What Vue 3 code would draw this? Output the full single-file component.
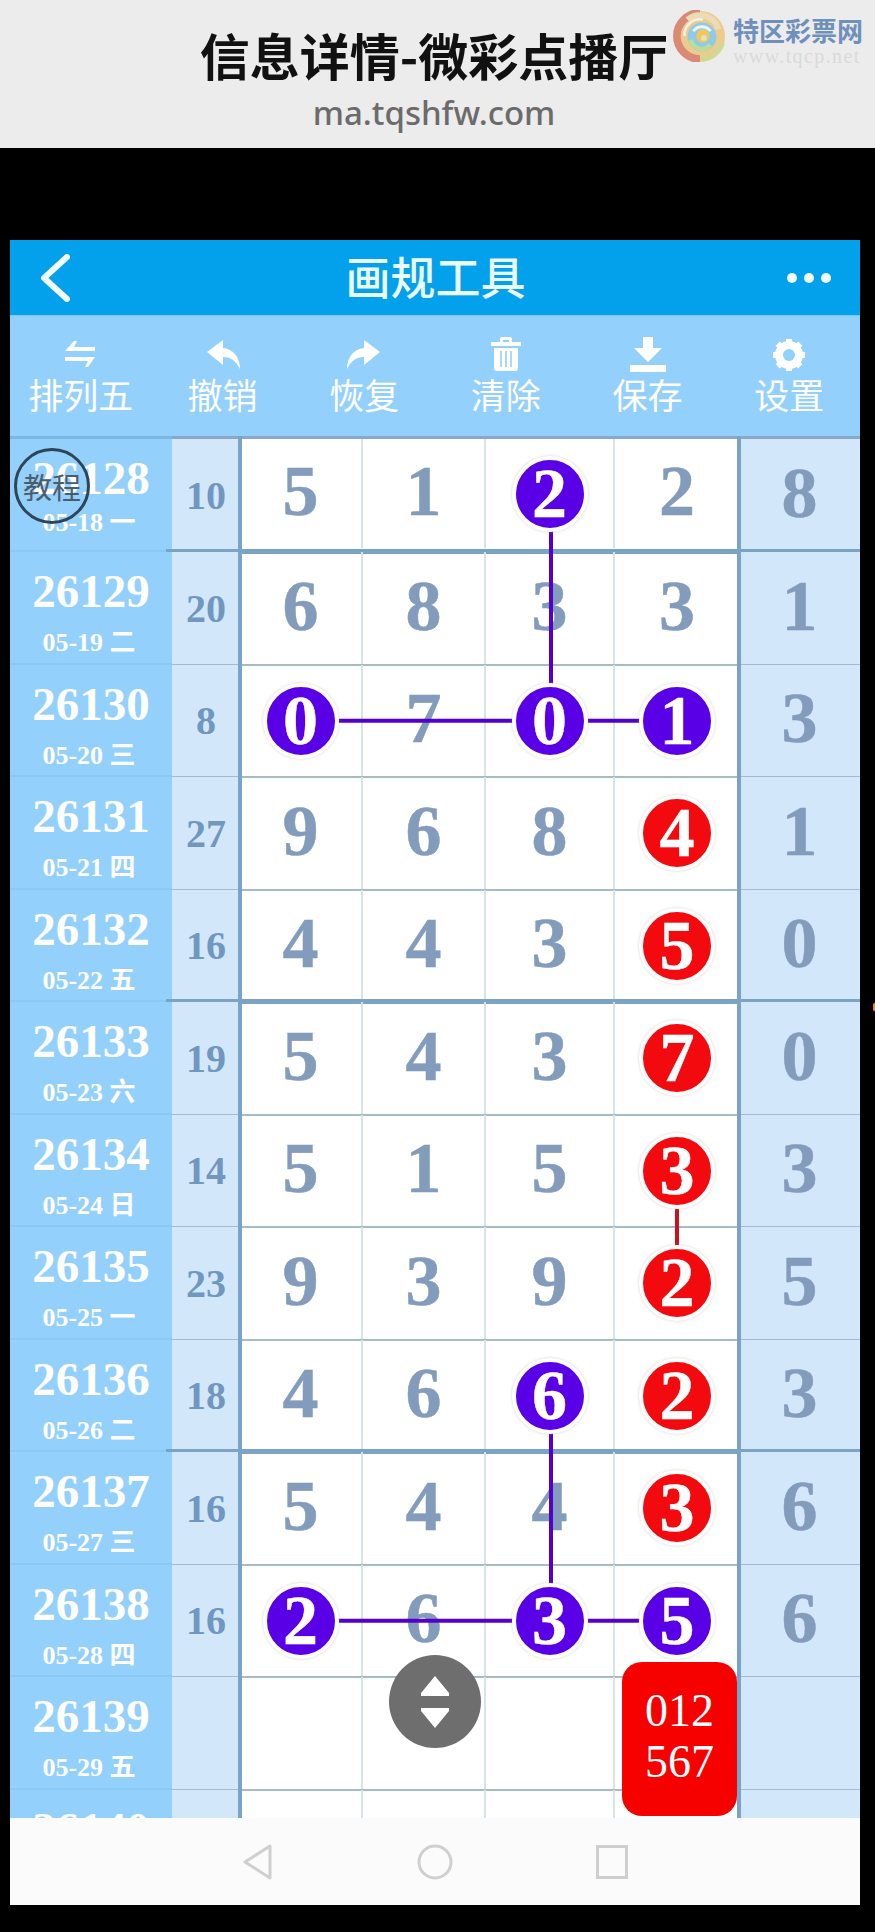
<template>
  <div class="page">
    <header class="site-head">
      <h1 class="site-title">信息详情-微彩点播厅</h1>
      <div class="site-domain">ma.tqshfw.com</div>
      <div class="watermark">
        <svg class="wm-logo" viewBox="0 0 54 54" width="54" height="52">
          <circle cx="27" cy="27" r="26" fill="#eecb8c" />
          <path d="M27 3 A24 24 0 0 0 27 51" fill="none" stroke="#d98a76" stroke-width="8" />
          <path d="M27 51 A24 24 0 0 0 50 34" fill="none" stroke="#d3d890" stroke-width="6" />
          <path d="M14 10 A20 20 0 0 1 46 20" fill="none" stroke="#eadcb8" stroke-width="6" />
          <path d="M11 27 A16 16 0 0 1 30 10" fill="none" stroke="#f4efe6" stroke-width="2.5" />
          <circle cx="29" cy="28" r="15" fill="#8ccbea" />
          <path d="M17 31 A12 12 0 0 0 38 36" fill="none" stroke="#bcdc9a" stroke-width="5" />
          <path d="M20 22 A11 11 0 0 1 38 22" fill="none" stroke="#f1f3ee" stroke-width="3" />
          <circle cx="30" cy="27" r="7" fill="#f1c75e" />
          <circle cx="31" cy="29" r="3" fill="#dce3c0" />
        </svg>
        <div class="wm-text">
          <div class="wm-name">特区彩票网</div>
          <div class="wm-url">www.tqcp.net</div>
        </div>
      </div>
    </header>

    <div class="app">
      <div class="app-bar">
        <svg class="back" viewBox="0 0 30 48" width="30" height="48">
          <path d="M27 3 L4 24 L27 45" fill="none" stroke="#f2fbff" stroke-width="6" stroke-linecap="round" stroke-linejoin="round" />
        </svg>
        <span class="app-title">画规工具</span>
        <div class="dots"><i></i><i></i><i></i></div>
      </div>

      <div class="toolbar">
        <div class="tool">
          <svg viewBox="0 0 38 38" width="38" height="38">
            <path d="M3 15 L12 5 H15 L12 11 H33 V15 Z M3 21 H33 L26 31 H23 L26 25 H3 Z" fill="#fff" />
          </svg>
          <span>排列五</span>
        </div>
        <div class="tool">
          <svg viewBox="0 0 38 38" width="38" height="38">
            <path d="M3 16 L19 4 V12 C30 13 36 22 36 33 C32 25 27 21 19 21 V29 Z" fill="#fff" />
          </svg>
          <span>撤销</span>
        </div>
        <div class="tool">
          <svg viewBox="0 0 38 38" width="38" height="38">
            <path d="M35 16 L19 4 V12 C8 13 2 22 2 33 C6 25 11 21 19 21 V29 Z" fill="#fff" />
          </svg>
          <span>恢复</span>
        </div>
        <div class="tool">
          <svg viewBox="0 0 38 38" width="38" height="38">
            <path d="M4 6 H13 V3 Q13 1 15 1 H23 Q25 1 25 3 V6 H34 V10 H4 Z M16 6 H22 V4 H16 Z" fill="#fff" fill-rule="evenodd" />
            <path d="M7 12 H31 V32 Q31 35 28 35 H10 Q7 35 7 32 Z" fill="#fff" />
            <path d="M14 15 V31 M19 15 V31 M24 15 V31" stroke="#94d0fc" stroke-width="1.6" />
          </svg>
          <span>清除</span>
        </div>
        <div class="tool">
          <svg viewBox="0 0 38 38" width="38" height="38">
            <path d="M14 1 H24 V12 H33 L19 26 L5 12 H14 Z" fill="#fff" />
            <path d="M1 29 H37 V36 H1 Z" fill="#fff" />
          </svg>
          <span>保存</span>
        </div>
        <div class="tool">
          <svg viewBox="0 0 38 38" width="38" height="38">
            <circle cx="19" cy="19" r="10.5" fill="none" stroke="#fff" stroke-width="7" />
            <path d="M19 3 V35 M3 19 H35 M7.7 7.7 L30.3 30.3 M30.3 7.7 L7.7 30.3" stroke="#fff" stroke-width="6" />
            <circle cx="19" cy="19" r="6" fill="#94d0fc" />
          </svg>
          <span>设置</span>
        </div>
      </div>

      <div class="board">
        <div class="top-line"></div>
        <div v-for="(row, i) in rows" :key="row.id" class="row" :class="{ first: i === 0, thick: i % 4 === 0 }">
          <div class="c-date">
            <div class="r-id">{{ row.id }}</div>
            <div class="r-date">{{ row.date }}</div>
          </div>
          <div class="c-sum">{{ row.sum }}</div>
          <div v-for="(n, j) in row.nums" :key="j" class="c-num" :class="{ last: j === 4 }">
            <span v-if="hitAt(i, j)" class="ball" :class="hitAt(i, j)">{{ n }}</span>
            <template v-else>{{ n }}</template>
          </div>
        </div>

        <i class="vline v1"></i>
        <i class="vline v2"></i>

        <svg class="links" width="850" height="1382">
          <line v-for="(s, k) in segments" :key="k" :x1="s.x1" :y1="s.y1" :x2="s.x2" :y2="s.y2" :stroke="s.color" stroke-width="4" />
        </svg>

        <div class="tutorial">教程</div>
        <div class="pick"><span>012</span><span>567</span></div>
        <div class="scroller">
          <svg viewBox="0 0 30 52" width="30" height="52">
            <path d="M15 0 L29 17 V20 H1 V17 Z M1 32 H29 V35 L15 52 L1 35 Z" fill="#fff" />
          </svg>
        </div>
      </div>

      <div class="nav">
        <svg viewBox="0 0 32 36" width="32" height="36">
          <path d="M28 2 L3 18 L28 34 Z" fill="none" stroke="#cfcfcf" stroke-width="3" stroke-linejoin="round" />
        </svg>
        <svg viewBox="0 0 36 36" width="36" height="36">
          <circle cx="18" cy="18" r="16" fill="none" stroke="#cfcfcf" stroke-width="3" />
        </svg>
        <svg viewBox="0 0 32 34" width="32" height="34">
          <rect x="1.5" y="1.5" width="29" height="31" fill="none" stroke="#cfcfcf" stroke-width="3" />
        </svg>
      </div>
    </div>
    <i class="edge-dot"></i>
  </div>
</template>

<script setup>
const rows = [
  { id: 26128, date: '05-18 一', sum: 10, nums: [5, 1, 2, 2, 8] },
  { id: 26129, date: '05-19 二', sum: 20, nums: [6, 8, 3, 3, 1] },
  { id: 26130, date: '05-20 三', sum: 8, nums: [0, 7, 0, 1, 3] },
  { id: 26131, date: '05-21 四', sum: 27, nums: [9, 6, 8, 4, 1] },
  { id: 26132, date: '05-22 五', sum: 16, nums: [4, 4, 3, 5, 0] },
  { id: 26133, date: '05-23 六', sum: 19, nums: [5, 4, 3, 7, 0] },
  { id: 26134, date: '05-24 日', sum: 14, nums: [5, 1, 5, 3, 3] },
  { id: 26135, date: '05-25 一', sum: 23, nums: [9, 3, 9, 2, 5] },
  { id: 26136, date: '05-26 二', sum: 18, nums: [4, 6, 6, 2, 3] },
  { id: 26137, date: '05-27 三', sum: 16, nums: [5, 4, 4, 3, 6] },
  { id: 26138, date: '05-28 四', sum: 16, nums: [2, 6, 3, 5, 6] },
  { id: 26139, date: '05-29 五', sum: '', nums: ['', '', '', '', ''] },
  { id: 26140, date: '05-30 六', sum: '', nums: ['', '', '', '', ''] }
]

// 选中的号码，row-col
const purple = ['0-2', '2-0', '2-2', '2-3', '8-2', '10-0', '10-2', '10-3']
const red = ['3-3', '4-3', '5-3', '6-3', '7-3', '8-3', '9-3']

const hitAt = (i, j) => {
  const key = `${i}-${j}`
  if (purple.includes(key)) return 'purple'
  if (red.includes(key)) return 'red'
  return ''
}

const colX = [291, 414, 541, 667]
const rowY = (i) => (i === 0 ? 57 : 116 + 112.5 * (i - 0.5))

const PURPLE = '#5400cc'
const RED = '#c4141e'
const segments = [
  { x1: colX[2], y1: rowY(0), x2: colX[2], y2: rowY(2), color: PURPLE },
  { x1: colX[0], y1: rowY(2), x2: colX[3], y2: rowY(2), color: PURPLE },
  { x1: colX[3], y1: rowY(6), x2: colX[3], y2: rowY(7), color: RED },
  { x1: colX[2], y1: rowY(8), x2: colX[2], y2: rowY(10), color: PURPLE },
  { x1: colX[0], y1: rowY(10), x2: colX[3], y2: rowY(10), color: PURPLE }
]
</script>

<style>
html,
body {
  background: #000;
}
</style>

<style scoped>
.page {
  position: relative;
  width: 875px;
  height: 1932px;
  overflow: hidden;
  background: #000;
  font-family: "Noto Sans CJK SC", sans-serif;
}

.site-head {
  position: relative;
  height: 148px;
  margin-bottom: 92px;
  padding-right: 7px;
  box-sizing: border-box;
  background: #ececec;
  text-align: center;
}

.site-title {
  margin: 0;
  padding-top: 24px;
  font-size: 50px;
  line-height: 60px;
  font-weight: 700;
  color: #111;
}

.site-domain {
  margin-top: 6px;
  font-family: "Noto Sans", sans-serif;
  font-size: 33px;
  line-height: 46px;
  font-weight: 500;
  color: #6b6b6b;
}

.watermark {
  position: absolute;
  left: 673px;
  top: 10px;
  display: flex;
  gap: 6px;
}

.wm-text {
  text-align: left;
}

.wm-name {
  margin-top: 4px;
  font-size: 26px;
  line-height: 32px;
  font-weight: 700;
  color: #6e90bb;
  white-space: nowrap;
}

.wm-url {
  font-family: "Liberation Serif", serif;
  font-size: 20px;
  line-height: 20px;
  letter-spacing: 1.4px;
  color: #dadada;
}

.app {
  width: 850px;
  margin-left: 10px;
}

.app-bar {
  display: flex;
  align-items: center;
  justify-content: space-between;
  height: 75px;
  padding: 0 29px 0 30px;
  box-sizing: border-box;
  background: #03a0ec;
}

.app-title {
  font-size: 45px;
  line-height: 60px;
  margin-top: -4px;
  font-weight: 500;
  color: #e9fbff;
  margin-left: 14px;
}

.dots {
  display: flex;
  gap: 7px;
}

.dots i {
  width: 10px;
  height: 10px;
  border-radius: 50%;
  background: #f2fbff;
}

.toolbar {
  display: flex;
  height: 121px;
  background: #94d0fc;
  border-top: 1px solid #7cc8fa;
  box-sizing: border-box;
}

.tool {
  flex: 1;
  display: flex;
  flex-direction: column;
  align-items: center;
  padding-top: 20px;
  color: #fff;
  font-size: 35px;
  line-height: 40px;
}

.board {
  position: relative;
  height: 1382px;
  overflow: hidden;
  background: #fff;
}

.top-line {
  height: 3px;
  background: linear-gradient(to right, #7fb5e4 162px, #88a9c9 162px);
}

.row {
  position: relative;
  display: grid;
  grid-template-columns: 162px 68px 123px 123px 129px 124px 121px;
  height: 112.5px;
}

.row.first {
  height: 113px;
  padding-bottom: 4px;
  box-sizing: border-box;
}

.row::after {
  content: "";
  position: absolute;
  left: 162px;
  right: 0;
  bottom: -1px;
  height: 2px;
  background: #a3bcc6;
}

.row.thick::after {
  left: 156px;
  bottom: -2px;
  height: 5px;
  background: #7ba3c4;
}

.c-date {
  display: flex;
  flex-direction: column;
  align-items: center;
  justify-content: center;
  padding-top: 8px;
  background: #94d0fc;
  border-bottom: 2px solid #8ac8f6;
  box-sizing: border-box;
  margin-bottom: -4px;
  color: #fff;
  font-family: "Liberation Serif", "Noto Sans CJK SC", serif;
  font-weight: 700;
}

.row:not(.first) .c-date {
  margin-bottom: 0;
}

.row.first .c-date {
  padding-top: 0;
}

.row.first .r-date {
  margin-top: 5px;
}

.r-id {
  font-size: 47px;
  line-height: 52px;
}

.r-date {
  margin-top: 12px;
  margin-right: 4px;
  font-size: 26px;
  line-height: 28px;
  white-space: nowrap;
}

.c-sum {
  display: flex;
  align-items: center;
  justify-content: center;
  background: #d3e7fa;
  margin-bottom: -4px;
  color: #6f97bf;
  font-family: "Liberation Serif", serif;
  font-size: 40px;
  font-weight: 700;
}

.row:not(.first) .c-sum {
  margin-bottom: 0;
}

.c-num {
  display: flex;
  align-items: center;
  justify-content: center;
  padding-bottom: 5px;
  box-sizing: border-box;
  border-right: 2px solid #d8e2e9;
  color: #839cbc;
  font-family: "Liberation Serif", serif;
  font-size: 72px;
  line-height: 1;
  font-weight: 700;
  -webkit-text-stroke: 0.5px currentColor;
}

.c-num:nth-last-child(2) {
  border-right: 0;
}

.c-num.last {
  border-right: 0;
  background: #d3e7fa;
  margin-bottom: -4px;
}

.row:not(.first) .c-num.last {
  margin-bottom: 0;
}

.ball {
  position: relative;
  z-index: 3;
  display: flex;
  align-items: center;
  justify-content: center;
  flex: none;
  width: 76px;
  height: 76px;
  margin-top: 5px;
  box-sizing: border-box;
  border: 4px solid #fff;
  border-radius: 50%;
  box-shadow: 0 0 3px rgba(170, 150, 120, 0.45);
  color: #fff;
  font-size: 70px;
}

.ball.purple {
  background: #5a00e6;
}

.ball.red {
  background: #f20a0f;
}

.vline {
  position: absolute;
  top: 0;
  bottom: 0;
  width: 4px;
  background: #7ba3c7;
  z-index: 1;
}

.v1 {
  left: 228px;
}

.v2 {
  left: 727px;
}

.links {
  position: absolute;
  top: 0;
  left: 0;
  z-index: 2;
}

.tutorial {
  position: absolute;
  left: 4px;
  top: 12px;
  z-index: 4;
  display: flex;
  align-items: center;
  justify-content: center;
  width: 76px;
  height: 76px;
  box-sizing: border-box;
  border: 3px solid #2e4558;
  border-radius: 50%;
  color: #4a5d6e;
  font-size: 29px;
}

.pick {
  position: absolute;
  left: 612px;
  top: 1226px;
  z-index: 4;
  display: flex;
  flex-direction: column;
  align-items: center;
  justify-content: center;
  width: 115px;
  height: 154px;
  padding-bottom: 6px;
  box-sizing: border-box;
  border-radius: 20px;
  background: #f60000;
  color: #fff;
  font-family: "Liberation Serif", serif;
  font-size: 46px;
  line-height: 51px;
}

.scroller {
  position: absolute;
  left: 379px;
  top: 1219px;
  z-index: 4;
  display: flex;
  align-items: center;
  justify-content: center;
  width: 92px;
  height: 93px;
  border-radius: 50%;
  background: #6e6e6e;
}

.nav {
  display: flex;
  align-items: center;
  justify-content: center;
  gap: 143px;
  height: 87px;
  background: #fbfbfb;
}

.edge-dot {
  position: absolute;
  left: 873px;
  top: 1003px;
  width: 3px;
  height: 8px;
  border-radius: 2px;
  background: #d98a4e;
}
</style>
